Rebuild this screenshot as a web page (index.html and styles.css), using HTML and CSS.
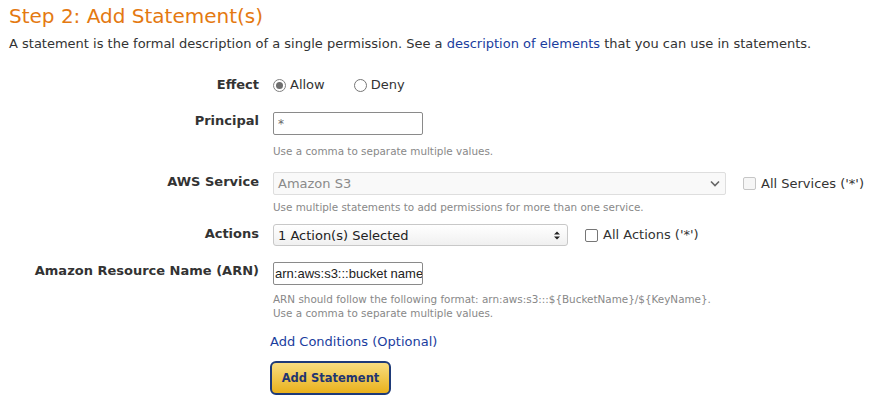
FILE: index.html
```html
<!DOCTYPE html>
<html>
<head>
<meta charset="utf-8">
<link rel="stylesheet" href="styles.css">
</head>
<body>
<h2 class="title">Step 2: Add Statement(s)</h2>
<p class="intro">A statement is the formal description of a single permission. See a <a href="#" class="link">description of elements</a> that you can use in statements.</p>

<div class="form">
  <div class="row row-effect">
    <div class="label">Effect</div>
    <div class="field radios">
      <label class="opt"><span class="radio checked"></span>Allow</label>
      <label class="opt opt-deny"><span class="radio"></span>Deny</label>
    </div>
  </div>

  <div class="row row-principal">
    <div class="label label-input">Principal</div>
    <div class="field">
      <div class="input input-principal">*</div>
      <div class="hint hint-first">Use a comma to separate multiple values.</div>
    </div>
  </div>

  <div class="row row-service">
    <div class="label label-select">AWS Service</div>
    <div class="field">
      <div class="line">
        <div class="select select-disabled">
          <span>Amazon S3</span>
          <svg width="10" height="7" viewBox="0 0 10 7"><path d="M1 1.5 L5 5.5 L9 1.5" fill="none" stroke="#666" stroke-width="1.6"/></svg>
        </div>
        <label class="opt check-opt check-services"><span class="checkbox disabled"></span>All Services ('*')</label>
      </div>
      <div class="hint hint-small">Use multiple statements to add permissions for more than one service.</div>
    </div>
  </div>

  <div class="row row-actions">
    <div class="label label-select">Actions</div>
    <div class="field">
      <div class="line">
        <div class="select select-actions">
          <span>1 Action(s) Selected</span>
          <svg width="6" height="9" viewBox="0 0 6 9"><path d="M0 3.5 L3 0.5 L6 3.5 Z M0 5.5 L3 8.5 L6 5.5 Z" fill="#222"/></svg>
        </div>
        <label class="opt check-opt check-actions"><span class="checkbox"></span>All Actions ('*')</label>
      </div>
    </div>
  </div>

  <div class="row row-arn">
    <div class="label label-input">Amazon Resource Name (ARN)</div>
    <div class="field">
      <div class="input input-arn">arn:aws:s3:::bucket name</div>
      <div class="hint hint-arn">ARN should follow the following format: arn:aws:s3:::${BucketName}/${KeyName}.<br>Use a comma to separate multiple values.</div>
    </div>
  </div>

  <div class="row row-cond">
    <div class="label"></div>
    <div class="field field-wide">
      <a href="#" class="link cond">Add Conditions (Optional)</a>
      <button class="btn">Add Statement</button>
    </div>
  </div>
</div>
</body>
</html>
```

FILE: styles.css
```css
* { box-sizing: border-box; }
html, body { margin: 0; padding: 0; background: #fff; }
body {
  font-family: "DejaVu Sans", Verdana, sans-serif;
  color: #333;
  font-size: 13px;
  padding: 0 9px;
  width: 874px;
  height: 404px;
  overflow: hidden;
}
.title {
  margin: 0;
  padding-top: 4px;
  font-size: 20px;
  line-height: 24px;
  font-weight: normal;
  color: #e47911;
}
.intro {
  margin: 8px 0 0;
  font-size: 13px;
  line-height: 16px;
}
.link { color: #1a3d9e; text-decoration: none; }

.form { display: flex; flex-direction: column; }
.row { display: flex; gap: 14px; }
.label {
  width: 250px;
  flex: none;
  text-align: right;
  font-weight: bold;
  font-size: 13px;
  line-height: 20px;
}
.field { display: flex; flex-direction: column; align-items: flex-start; }

.row-effect { margin-top: 23px; }
.row-principal { margin-top: 17px; }
.row-service { margin-top: 14px; }
.row-actions { margin-top: 10px; }
.row-arn { margin-top: 16px; }
.row-cond { margin-top: 14px; }

.label-input { line-height: 16px; padding-top: 1px; }
.label-select { line-height: 20px; }

.radios { flex-direction: row; align-items: center; height: 20px; }
.opt { display: flex; align-items: center; font-size: 13px; line-height: 20px; color: #333; }
.opt-deny { margin-left: 29px; }
.radio {
  width: 13px; height: 13px; border-radius: 50%;
  border: 1px solid #767676; background: #fff;
  margin-right: 4px; display: inline-flex; align-items: center; justify-content: center;
}
.radio.checked { border-color: #808080; }
.radio.checked::after {
  content: ""; width: 7px; height: 7px; border-radius: 50%; background: #6e6e6e;
}

.input {
  height: 23px;
  border: 1px solid #8a8a8a;
  border-radius: 2px;
  padding: 0 4px;
  display: flex; align-items: center;
}
.input-principal { width: 150px; color: #666; font-size: 12px; }
.input-arn { width: 150px; font-family: "Liberation Sans", Arial, sans-serif; font-size: 13px; color: #222; padding: 0 1px; white-space: nowrap; overflow: hidden; }

.hint { font-size: 10.4px; line-height: 14px; color: #888; }
.hint-first { margin-top: 9px; }
.hint-small { margin-top: 5px; }
.hint-arn { margin-top: 7px; }

.line { display: flex; align-items: center; }
.select {
  display: flex; align-items: center; justify-content: space-between;
  font-size: 13px;
}
.select-disabled {
  width: 453px; height: 23px;
  border: 1px solid #dedede; border-radius: 2px;
  background: #f9f9f9; color: #8a8a8a;
  padding: 0 5px 0 4px;
}
.select-actions {
  width: 295px; height: 22px;
  border: 1px solid #c8c8c8; border-radius: 3px;
  background: linear-gradient(#fff, #f0f0f0);
  color: #222;
  padding: 0 7px 0 4px;
}
.check-opt { margin-left: 17px; }
.check-actions { margin-left: 17px; }
.checkbox {
  width: 13px; height: 13px; border: 1px solid #767676; border-radius: 2px;
  background: #fff; margin-right: 5px;
}
.checkbox.disabled { border-color: #c6c6c6; background: #f6f6f6; }
.check-services { color: #333; }

.field-wide { align-items: flex-start; margin-left: -3px; }
.cond { font-size: 13px; line-height: 16px; }
.btn {
  margin-top: 11px;
  width: 121px; height: 34px;
  border: 2px solid #1e3a78;
  border-radius: 6px;
  background: linear-gradient(#f8dd80, #e9b11c);
  color: #1f3571;
  font-family: "DejaVu Sans", Verdana, sans-serif;
  font-weight: bold;
  font-size: 11.5px;
  padding: 0;
  cursor: pointer;
}
```
